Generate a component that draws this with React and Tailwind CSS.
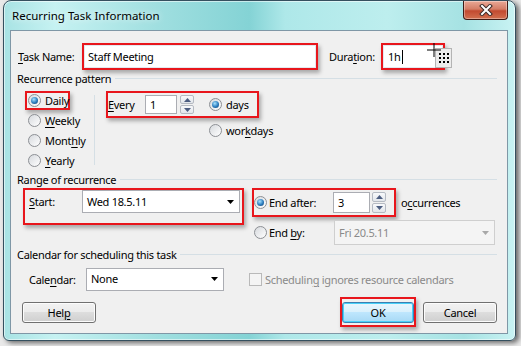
import React from "react";

const red = "border-2 border-[#e8161c] shadow-[2px_3px_4px_rgba(0,0,0,0.3)]";

function Radio({ checked }) {
  return (
    <span className="flex h-[13px] w-[13px] shrink-0 items-center justify-center rounded-full border border-[#8c8f94] bg-[linear-gradient(135deg,#d6d9dd,#ffffff)]">
      {checked && (
        <span className="h-[7px] w-[7px] rounded-full bg-[radial-gradient(circle_at_40%_35%,#a6e2ff,#2a7bbd_55%,#0f3c6a)]" />
      )}
    </span>
  );
}

function Spin() {
  return (
    <div className="flex h-full w-[14px] flex-col gap-px">
      <span className="flex flex-1 items-center justify-center rounded-[2px] border border-[#b5bac2] bg-[linear-gradient(#f8f9fb,#e2e6eb)]">
        <svg width="7" height="4" viewBox="0 0 7 4">
          <path d="M0 4L3.5 0L7 4Z" fill="#4c5d80" />
        </svg>
      </span>
      <span className="flex flex-1 items-center justify-center rounded-[2px] border border-[#b5bac2] bg-[linear-gradient(#f8f9fb,#e2e6eb)]">
        <svg width="7" height="4" viewBox="0 0 7 4">
          <path d="M0 0L3.5 4L7 0Z" fill="#4c5d80" />
        </svg>
      </span>
    </div>
  );
}

function Arrow({ color = "#000" }) {
  return (
    <svg width="7" height="4" viewBox="0 0 7 4">
      <path d="M0 0L3.5 4L7 0Z" fill={color} />
    </svg>
  );
}

function Group({ title }) {
  return (
    <div className="flex h-[16px] items-center pl-[6px] pr-[10px]">
      <span>{title}</span>
      <span className="ml-[4px] h-px flex-1 bg-[#d5dfe5]" />
    </div>
  );
}

const U = ({ children }) => <u className="underline-offset-[2px]">{children}</u>;

const btn =
  "flex h-[21px] items-center justify-center rounded-[3px] border border-[#707070] bg-[linear-gradient(#f2f2f2_0%,#ebebeb_49%,#dddddd_50%,#cfcfcf_100%)] shadow-[inset_0_0_0_1px_#fcfcfc]";

export default function App() {
  return (
    <div className="h-[346px] w-[521px] overflow-hidden whitespace-nowrap bg-[#e9e9e9] font-['Noto_Sans',sans-serif] text-[11px] leading-none tracking-[-0.3px] text-black">
      <div className="ml-[3px] flex h-[341px] w-[513px] flex-col rounded-t-[8px] rounded-b-[6px] border border-[#35505f] bg-[linear-gradient(90deg,#a8e3e4_0%,#c6f2f2_10%,#a0dfe0_30%,#84d3d5_48%,#aee8e9_55%,#bdeeee_75%,#a6e2e3_90%,#c9f3f3_100%)] shadow-[3px_2px_5px_rgba(0,0,0,0.55),inset_0_0_0_1px_rgba(255,255,255,0.55)]">
        {/* Title bar */}
        <div className="flex h-[29px] items-start justify-between">
          <span className="flex h-[29px] items-center pl-[8px] text-[11.5px] tracking-normal [text-shadow:0_0_6px_rgba(255,255,255,0.95)]">
            Recurring Task Information
          </span>
          <div className="mr-[7px] flex h-[19px] w-[45px] items-center justify-center rounded-b-[4px] border border-t-0 border-[#3f1b15] bg-[linear-gradient(#e9a896_0%,#d47d66_45%,#c24a30_55%,#d2704f_100%)] shadow-[inset_0_0_0_1px_rgba(255,255,255,0.35)]">
            <svg width="14" height="12" viewBox="0 0 14 12">
              <path d="M3 2L11 10M11 2L3 10" stroke="#3a2a28" strokeWidth="4" strokeLinecap="square" />
              <path d="M3 2L11 10M11 2L3 10" stroke="#ffffff" strokeWidth="2" strokeLinecap="square" />
            </svg>
          </div>
        </div>

        {/* Client area */}
        <div className="ml-[6px] h-[304px] w-[498px] border border-[#7f97a6] bg-[#f0f0f0]">
          {/* Task name / duration */}
          <div className="mt-[12px] flex h-[27px] items-center pl-[7px]">
            <span className="w-[64px]">
              <U>T</U>ask Name:
            </span>
            <div className={`${red} flex h-[27px] w-[236px]`}>
              <div className="flex flex-1 items-center border border-[#e3e9ef] bg-white pl-[3px]">Staff Meeting</div>
            </div>
            <span className="ml-[11px] w-[52px]">
              Dura<U>t</U>ion:
            </span>
            <div className="relative">
              <div className={`${red} flex h-[27px] w-[64px]`}>
                <div className="flex flex-1 items-center border border-[#e3e9ef] bg-white pl-[4px]">
                  1h<span className="ml-px h-[14px] w-px bg-black" />
                </div>
              </div>
              <div className="absolute left-[54px] top-[5px] flex h-[20px] w-[17px] items-center justify-center border border-[#b4b4b4] bg-[#ececec]">
                <div className="grid grid-cols-3 gap-[2px]">
                  {Array.from({ length: 9 }).map((_, i) => (
                    <span key={i} className="h-[2px] w-[2px] bg-black" />
                  ))}
                </div>
              </div>
              <svg className="absolute left-[46px] top-[0px]" width="14" height="14" viewBox="0 0 14 14">
                <path d="M7 0V14M0 7H14" stroke="#000" strokeWidth="1" />
              </svg>
            </div>
          </div>

          <Group title="Recurrence pattern" />

          {/* Pattern */}
          <div className="flex h-[84px]">
            <div className="flex w-[83px] flex-col pl-[14px] pt-[5px]">
              <div className={`${red} flex h-[19px] w-[45px] items-center gap-[4px] pl-px`}>
                <Radio checked />
                <span>Daily</span>
              </div>
              <div className="flex h-[20px] items-center gap-[4px] pl-[3px]">
                <Radio />
                <span>
                  <U>W</U>eekly
                </span>
              </div>
              <div className="flex h-[20px] items-center gap-[4px] pl-[3px]">
                <Radio />
                <span>
                  Mont<U>h</U>ly
                </span>
              </div>
              <div className="flex h-[20px] items-center gap-[4px] pl-[3px]">
                <Radio />
                <span>
                  <U>Y</U>early
                </span>
              </div>
            </div>
            <span className="mt-[9px] h-[70px] w-px bg-[#d5dfe5]" />
            <div className="flex flex-col pl-[11px] pt-[5px]">
              <div className={`${red} flex h-[27px] w-[153px] items-center`}>
                <span className="w-[37px]">
                  <U>E</U>very
                </span>
                <div className="flex h-[19px] w-[32px] items-center border border-[#abadb3] bg-white pl-[4px]">1</div>
                <div className="ml-[3px] h-[19px]">
                  <Spin />
                </div>
                <span className="ml-[15px]">
                  <Radio checked />
                </span>
                <span className="ml-[4px]">days</span>
              </div>
              <div className="mt-[3px] flex h-[18px] items-center gap-[4px] pl-[103px]">
                <Radio />
                <span>
                  wor<U>k</U>days
                </span>
              </div>
            </div>
          </div>

          <div className="mt-[1px]">
            <Group title="Range of recurrence" />
          </div>

          {/* Range */}
          <div className="flex h-[58px] pl-[12px] pt-[1px]">
            <div className={`${red} flex h-[37px] w-[221px] items-start pl-[4px]`}>
              <span className="flex h-[23px] w-[53px] items-center">
                <U>S</U>tart:
              </span>
              <div className="flex h-[23px] w-[158px] items-center justify-between border border-[#abadb3] bg-white pl-[4px] pr-[5px]">
                <span>Wed 18.5.11</span>
                <Arrow />
              </div>
            </div>
            <div className="ml-[8px] flex flex-col">
              <div className="flex items-center">
                <div className={`${red} flex h-[29px] w-[144px] items-center`}>
                  <Radio checked />
                  <span className="ml-[2px] w-[64px]">End after:</span>
                  <div className="flex h-[21px] w-[37px] items-center border border-[#abadb3] bg-white pl-[4px]">3</div>
                  <div className="ml-[2px] h-[21px]">
                    <Spin />
                  </div>
                </div>
                <span className="ml-[5px]">
                  o<U>c</U>currences
                </span>
              </div>
              <div className="mt-[3px] flex h-[25px] items-center pl-[2px]">
                <Radio />
                <span className="ml-[2px] w-[65px]">
                  End <U>b</U>y:
                </span>
                <div className="flex h-[25px] w-[161px] items-center justify-between border border-[#cfcfcf] bg-[#f4f4f4] pl-[4px] pr-[5px] text-[#8a8a8a]">
                  <span>Fri 20.5.11</span>
                  <Arrow color="#a8a8a8" />
                </div>
              </div>
            </div>
          </div>

          <div className="mt-[1px]">
            <Group title="Calendar for scheduling this task" />
          </div>

          {/* Calendar */}
          <div className="mt-[6px] flex h-[23px] items-center pl-[18px]">
            <span className="w-[57px]">
              Cale<U>n</U>dar:
            </span>
            <div className="flex h-[23px] w-[138px] items-center justify-between border border-[#abadb3] bg-white pb-[2px] pl-[4px] pr-[5px]">
              <span>None</span>
              <Arrow />
            </div>
            <span className="ml-[25px] h-[13px] w-[13px] border border-[#b9b9b9] bg-[#f4f4f4]" />
            <span className="ml-[3px] text-[#8a8a8a]">
              Schedulin<U>g</U> ignores resource calendars
            </span>
          </div>

          {/* Buttons */}
          <div className="mt-[6px] flex h-[30px] items-center pl-[11px] pr-[10px]">
            <div className={`${btn} w-[74px]`}>
              Hel<U>p</U>
            </div>
            <div className={`${red} ml-auto flex h-[30px] w-[76px] items-center justify-center`}>
              <div className="flex h-[21px] w-[72px] items-center justify-center rounded-[3px] border border-[#3c7fb1] bg-[linear-gradient(#eaf6fd_0%,#d9f0fc_49%,#bee6fd_50%,#a7d9f5_100%)] shadow-[inset_0_0_0_1px_#48d0f8]">
                OK
              </div>
            </div>
            <div className={`${btn} ml-[7px] w-[74px]`}>Cancel</div>
          </div>
        </div>
      </div>
    </div>
  );
}
